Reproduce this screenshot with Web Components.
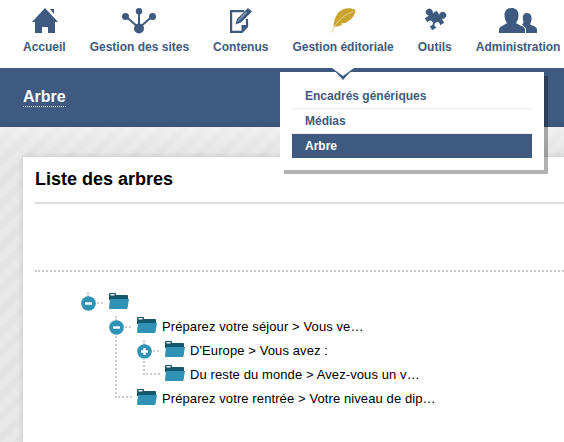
<!DOCTYPE html>
<html lang="fr">
<head>
<meta charset="utf-8">
<title>Arbre</title>
<style>
  html, body { margin: 0; padding: 0; height: 100%; overflow: hidden; background: #fff; }
  body { font-family: "Liberation Sans", Arial, sans-serif; }
</style>
</head>
<body>
<app-shell>
  <main-nav slot="nav">
    <nav-item label="Accueil" shift="1">
      <svg viewBox="0 0 26 25" width="26" height="25"><path fill="#3f5a80" d="M13 0 L26 14 H23 V25 H16 V19 H10 V25 H3 V14 H0 Z"/><path fill="#3f5a80" d="M18 1 L22 1 V6 Z"/></svg>
    </nav-item>
    <nav-item label="Gestion des sites">
      <svg viewBox="0 0 34 26" width="34" height="26"><g fill="#3f5a80"><path stroke="#3f5a80" stroke-width="2" fill="none" d="M17 20 V4 M17 20 L4 8.500 M17 20 L30 8.500"/><circle cx="17" cy="3.200" r="3.200"/><circle cx="3.500" cy="8.500" r="3.500"/><circle cx="30.500" cy="8.500" r="3.500"/><circle cx="17" cy="20.500" r="5"/></g></svg>
    </nav-item>
    <nav-item label="Contenus">
      <svg viewBox="0 0 22 25" width="22" height="25"><path fill="none" stroke="#3f5a80" stroke-width="2.200" d="M14 3.100 H1.100 V23.900 H12 L17 18.500 V11"/><path fill="#3f5a80" d="M11.500 25 V17 H18.500 Z"/><path fill="#3f5a80" d="M18 0 L22 3.500 L11 14.500 L5.500 16.500 L7 11 Z"/><path fill="#fff" d="M15.500 3.500 L17 5 L8.500 13.500 L8 12 Z" opacity=".35"/></svg>
    </nav-item>
    <nav-item label="Gestion éditoriale">
      <svg viewBox="0 0 25 25" width="25" height="25"><path fill="#c9a52e" d="M24.500 2 C19 -1 11 0 7 5 C4 9 2.500 14 2.500 18.500 C6 19 9 18 11 17 L10 15.500 L14.500 15 C20 12 24 8 24.500 2 Z"/><path fill="none" stroke="#e6d48c" stroke-width="1" d="M0.500 24.500 C3 17 10 8 22 3.500"/></svg>
    </nav-item>
    <nav-item label="Outils">
      <svg viewBox="-11.500 -11.500 23 23" width="25" height="25"><g transform="rotate(-32)"><rect x="-6.500" y="-6.500" width="13" height="13" fill="#3f5a80"/><rect x="-1.500" y="-8" width="3" height="3" fill="#3f5a80"/><circle cx="0" cy="-9" r="3.200" fill="#3f5a80"/><rect x="5" y="-1.500" width="3" height="3" fill="#3f5a80"/><circle cx="9" cy="0" r="3.200" fill="#3f5a80"/><circle cx="0" cy="4.800" r="2.500" fill="#fff"/><rect x="-1.200" y="5" width="2.400" height="2" fill="#fff"/><circle cx="-4.800" cy="0" r="2.500" fill="#fff"/><rect x="-7" y="-1.200" width="2" height="2.400" fill="#fff"/></g></svg>
    </nav-item>
    <nav-item label="Administration">
      <svg viewBox="0 0 38 25" width="38" height="25"><path fill="#3f5a80" d="M27 25 V21 C26 18.500 24 17.500 23 16.500 C24.500 15.500 24.800 14 24 12 C23.300 8 24.500 5 28 5 C31.500 5 33 8 32.500 12 C32 14 31.500 15 31 16.500 C33 17.500 37 18 38 21 V25 Z"/><path fill="#3f5a80" stroke="#fff" stroke-width="1.500" paint-order="stroke" d="M0 25 V21 C1 18 6 17 8 15 C6 12 5.500 10 5.500 7 C5.500 2.500 8.500 0 12.500 0 C16.500 0 19.500 2.500 19.500 7 C19.500 10 19 12 17 15 C19 17 25 18 26 21 V25 Z"/></svg>
    </nav-item>
  </main-nav>
  <page-banner slot="banner" title-text="Arbre"></page-banner>
  <sub-menu slot="menu">
    <menu-entry>Encadrés génériques</menu-entry>
    <menu-entry>Médias</menu-entry>
    <menu-entry active>Arbre</menu-entry>
  </sub-menu>
  <content-card heading="Liste des arbres">
    <tree-row depth="0" toggle="minus" stem-up></tree-row>
    <tree-row depth="1" toggle="minus" stem-up>Préparez votre séjour &gt; Vous ve…</tree-row>
    <tree-row depth="2" toggle="plus" stem-up>D'Europe &gt; Vous avez :</tree-row>
    <tree-row depth="2" elbow>Du reste du monde &gt; Avez-vous un v…</tree-row>
    <tree-row depth="1" elbow long>Préparez votre rentrée &gt; Votre niveau de dip…</tree-row>
  </content-card>
</app-shell>
<script>
class AppShell extends HTMLElement {
    constructor() {
        super();
        this.attachShadow({ mode: 'open' });
        this.shadowRoot.innerHTML = `
            <style>
                :host { display: block; position: relative; height: 442px; overflow: hidden; }
                .stripes {
                    height: 315px;
                    box-sizing: border-box;
                    padding: 30px 0 0 23px;
                    background:
                        linear-gradient(rgba(255, 255, 255, .35), rgba(255, 255, 255, 0) 24px),
                        repeating-linear-gradient(135deg, #e8e8e8 0 6px, #e4e4e4 8px 13px, #e8e8e8 15px);
                }
            </style>
            <slot name="nav"></slot>
            <slot name="banner"></slot>
            <slot name="menu"></slot>
            <div class="stripes"><slot></slot></div>
        `;
    }
}

class MainNav extends HTMLElement {
    constructor() {
        super();
        this.attachShadow({ mode: 'open' });
        this.shadowRoot.innerHTML = `
            <style>
                :host { display: flex; gap: 24px; height: 68px; padding-left: 23px; background: #fff; }
            </style>
            <slot></slot>
        `;
    }
}

class NavItem extends HTMLElement {
    constructor() {
        super();
        this.attachShadow({ mode: 'open' });
        const shift = this.getAttribute('shift') || 0;
        this.shadowRoot.innerHTML = `
            <style>
                :host {
                    display: flex;
                    flex-direction: column;
                    align-items: center;
                    flex: none;
                    color: #3f5a80;
                    font-size: 12px;
                    font-weight: bold;
                    white-space: nowrap;
                }
                .icon {
                    height: 25px;
                    margin: 8px 0 7px ${shift}px;
                    display: flex;
                    align-items: flex-start;
                    justify-content: center;
                }
                .label { line-height: 14px; }
            </style>
            <div class="icon"><slot></slot></div>
            <div class="label">${this.getAttribute('label')}</div>
        `;
    }
}

class PageBanner extends HTMLElement {
    constructor() {
        super();
        this.attachShadow({ mode: 'open' });
        this.shadowRoot.innerHTML = `
            <style>
                :host {
                    display: block;
                    height: 59px;
                    box-sizing: border-box;
                    padding: 19px 0 0 23px;
                    background: linear-gradient(#3f5a80 0 52px, #3a5376 59px);
                }
                span {
                    display: inline-block;
                    color: #fff;
                    font-size: 16px;
                    font-weight: bold;
                    line-height: 19px;
                    border-bottom: 1px dotted #fff;
                }
            </style>
            <span>${this.getAttribute('title-text')}</span>
        `;
    }
}

class SubMenu extends HTMLElement {
    constructor() {
        super();
        this.attachShadow({ mode: 'open' });
        this.shadowRoot.innerHTML = `
            <style>
                :host {
                    position: absolute;
                    left: 280px;
                    top: 72px;
                    width: 264px;
                    height: 98px;
                    box-sizing: border-box;
                    padding: 12px 12px 0;
                    background: #fff;
                    box-shadow: 4px 4px 0 rgba(0, 0, 0, .3);
                }
                svg { position: absolute; left: 52px; top: -4px; display: block; }
            </style>
            <svg width="22" height="12" viewBox="0 0 22 12">
                <path fill="#3f5a80" d="M0 0 H22 L11 12 Z"/>
                <path fill="#fff" d="M0 0 H22 L11 8 Z"/>
            </svg>
            <slot></slot>
        `;
    }
}

class MenuEntry extends HTMLElement {
    constructor() {
        super();
        this.attachShadow({ mode: 'open' });
        const active = this.hasAttribute('active');
        this.shadowRoot.innerHTML = `
            <style>
                :host {
                    display: block;
                    height: ${active ? 24 : 25}px;
                    box-sizing: border-box;
                    padding-left: 13px;
                    line-height: 24px;
                    font-size: 12px;
                    font-weight: bold;
                    color: ${active ? '#fff' : '#3f5a80'};
                    background: ${active ? '#3f5a80' : 'transparent'};
                    border-bottom: ${active ? '0' : '1px solid #ececec'};
                }
            </style>
            <slot></slot>
        `;
    }
}

class ContentCard extends HTMLElement {
    constructor() {
        super();
        this.attachShadow({ mode: 'open' });
        this.shadowRoot.innerHTML = `
            <style>
                :host {
                    display: block;
                    height: 285px;
                    box-sizing: border-box;
                    padding: 0 0 0 12px;
                    background: #fff;
                    box-shadow: 0 0 6px rgba(0, 0, 0, .15);
                    color: #000;
                }
                h2 {
                    margin: 0;
                    height: 47px;
                    box-sizing: border-box;
                    padding-top: 11px;
                    font-size: 18px;
                    line-height: 22px;
                    border-bottom: 2px solid #ddd;
                }
                .filters { height: 66px; border-bottom: 2px dotted #ccc; }
                .tree { padding-top: 17px; }
            </style>
            <h2>${this.getAttribute('heading')}</h2>
            <div class="filters"></div>
            <div class="tree"><slot></slot></div>
        `;
    }
}

class TreeRow extends HTMLElement {
    constructor() {
        super();
        this.attachShadow({ mode: 'open' });
        const depth = +this.getAttribute('depth');
        const toggle = this.getAttribute('toggle');
        const bar = toggle === 'plus' ? '<path d="M7.500 4v7" stroke="#fff" stroke-width="2.400"/>' : '';
        const toggleSvg = toggle ? `
            <svg class="toggle" width="15" height="15" viewBox="0 0 15 15">
                <circle cx="7.500" cy="7.500" r="7.300" fill="#2e93b4"/>
                <path d="M4 7.500h7" stroke="#fff" stroke-width="2.400"/>${bar}
            </svg>` : '';
        this.shadowRoot.innerHTML = `
            <style>
                :host {
                    display: flex;
                    align-items: center;
                    position: relative;
                    height: 24px;
                    margin-left: ${46 + depth * 28}px;
                    font-size: 13px;
                    letter-spacing: .1px;
                    white-space: nowrap;
                }
                .toggle { position: absolute; left: 0; top: 7px; }
                .hdash { position: absolute; left: 16px; top: 13px; width: 6px; border-top: 2px dotted #ccc; }
                .up { position: absolute; left: 6px; top: 3px; height: 3px; border-left: 2px dotted #ccc; }
                .elbow { position: absolute; left: 6px; top: -3px; height: 15px; width: 15px;
                         border-left: 2px dotted #ccc; border-bottom: 2px dotted #ccc; }
                .elbow.long { top: -49px; height: 60px; }
                .folder { margin-left: 28px; flex: none; display: block; }
                .text { margin-left: 5px; padding-top: 3px; }
            </style>
            ${this.hasAttribute('stem-up') ? '<span class="up"></span>' : ''}
            ${this.hasAttribute('elbow') ? `<span class="elbow ${this.hasAttribute('long') ? 'long' : ''}"></span>` : '<span class="hdash"></span>'}
            ${toggleSvg}
            <svg class="folder" width="20" height="16" viewBox="0 0 20 16">
                <path fill="#15566b" d="M0 3 V1 Q0 0 1 0 H6 Q7 0 7 1 V2 H18 Q19 2 19 3 V7 H0 Z"/>
                <path fill="#fff" d="M1.500 1 h4 v1.500 h-4 Z"/>
                <path fill="#2e93b4" d="M1 6 H20 L18.500 15 Q18.300 16 17 16 H1 Q0 16 0 15 Z"/>
            </svg>
            <span class="text"><slot></slot></span>
        `;
    }
}

customElements.define('app-shell', AppShell);
customElements.define('main-nav', MainNav);
customElements.define('nav-item', NavItem);
customElements.define('page-banner', PageBanner);
customElements.define('sub-menu', SubMenu);
customElements.define('menu-entry', MenuEntry);
customElements.define('content-card', ContentCard);
customElements.define('tree-row', TreeRow);
</script>
</body>
</html>
